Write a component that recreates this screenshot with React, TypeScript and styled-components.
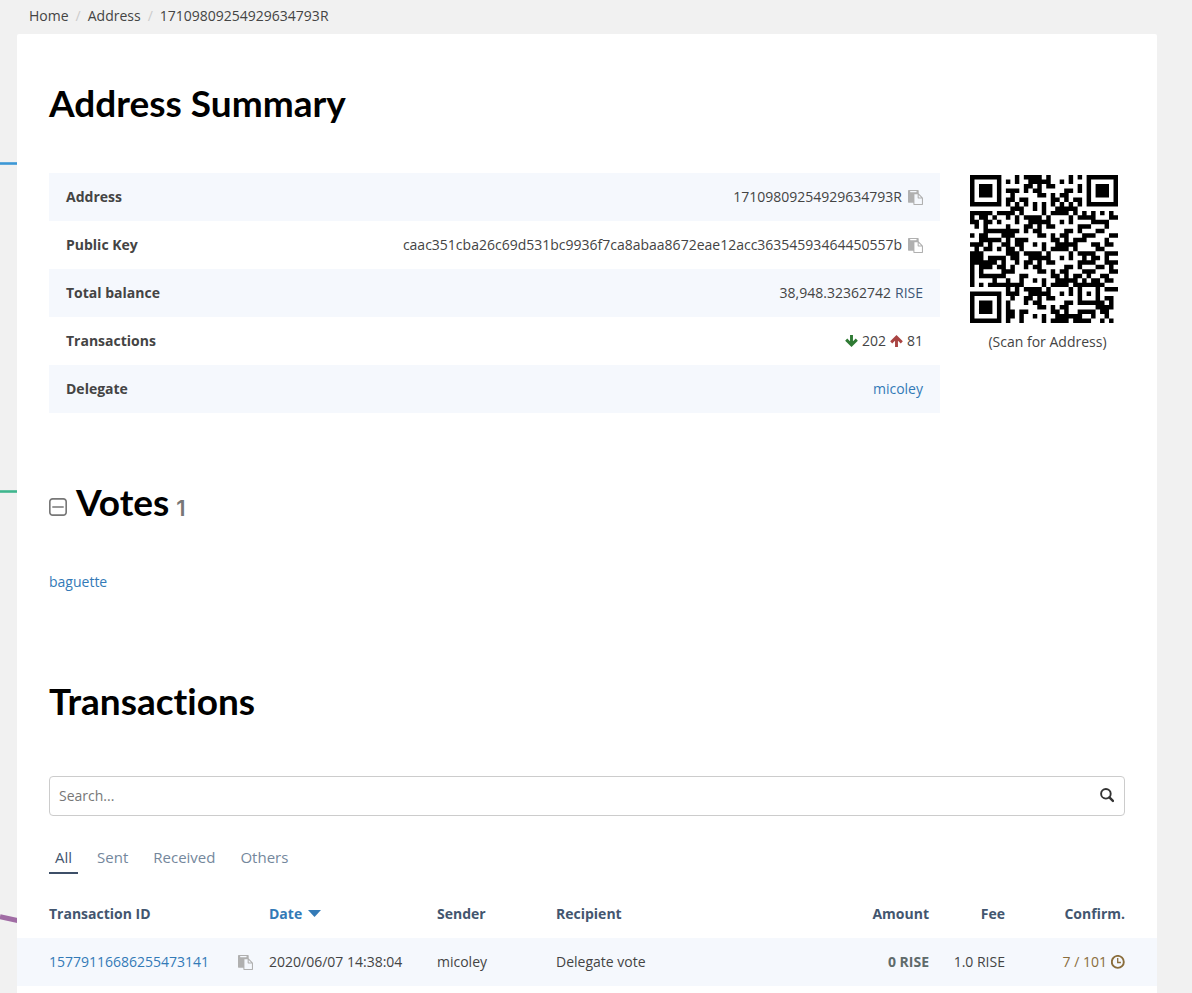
import React from "react";
import styled, { createGlobalStyle } from "styled-components";

const GlobalStyle = createGlobalStyle`
  *, *::before, *::after { box-sizing: border-box; }
  body {
    margin: 0;
    background: #f1f1f1;
    color: #444;
    font: 14px/20px "Open Sans", sans-serif;
  }
`;

/* ---------- QR code (version 4, level L, mask 2, byte mode) ---------- */

const QR_SIZE = 33;
const DATA_WORDS = 80;
const EC_WORDS = 20;

function gfMultiply(a: number, b: number): number {
  let product = 0;
  for (let i = 7; i >= 0; i--) {
    product = (product << 1) ^ ((product >>> 7) * 0x11d);
    product ^= ((b >>> i) & 1) * a;
  }
  return product;
}

function errorWords(data: number[]): number[] {
  const divisor: number[] = new Array(EC_WORDS).fill(0);
  divisor[EC_WORDS - 1] = 1;
  let root = 1;
  for (let i = 0; i < EC_WORDS; i++) {
    for (let j = 0; j < EC_WORDS; j++) {
      divisor[j] = gfMultiply(divisor[j], root);
      if (j + 1 < EC_WORDS) divisor[j] ^= divisor[j + 1];
    }
    root = gfMultiply(root, 2);
  }
  const rest: number[] = new Array(EC_WORDS).fill(0);
  data.forEach((word) => {
    const factor = word ^ (rest.shift() as number);
    rest.push(0);
    divisor.forEach((d, i) => {
      rest[i] ^= gfMultiply(d, factor);
    });
  });
  return rest;
}

function encodeText(text: string): number[] {
  const bits: number[] = [];
  const push = (value: number, length: number) => {
    for (let i = length - 1; i >= 0; i--) bits.push((value >>> i) & 1);
  };
  push(4, 4);
  push(text.length, 8);
  for (const char of text) push(char.charCodeAt(0), 8);
  push(0, 4);
  while (bits.length % 8) bits.push(0);
  const words: number[] = [];
  for (let i = 0; i < bits.length; i += 8) {
    words.push(parseInt(bits.slice(i, i + 8).join(""), 2));
  }
  for (let pad = 0xec; words.length < DATA_WORDS; pad ^= 0xec ^ 0x11) words.push(pad);
  return words.concat(errorWords(words));
}

function qrPath(text: string): string {
  const dark: boolean[][] = Array.from({ length: QR_SIZE }, () => new Array(QR_SIZE).fill(false));
  const fixed: boolean[][] = Array.from({ length: QR_SIZE }, () => new Array(QR_SIZE).fill(false));
  const set = (row: number, col: number, value: boolean) => {
    if (row < 0 || col < 0 || row >= QR_SIZE || col >= QR_SIZE) return;
    dark[row][col] = value;
    fixed[row][col] = true;
  };

  for (let i = 0; i < QR_SIZE; i++) {
    set(6, i, i % 2 === 0);
    set(i, 6, i % 2 === 0);
  }
  [[3, 3], [3, QR_SIZE - 4], [QR_SIZE - 4, 3]].forEach(([row, col]) => {
    for (let y = -4; y <= 4; y++) {
      for (let x = -4; x <= 4; x++) {
        const ring = Math.max(Math.abs(x), Math.abs(y));
        set(row + y, col + x, ring !== 2 && ring !== 4);
      }
    }
  });
  for (let y = -2; y <= 2; y++) {
    for (let x = -2; x <= 2; x++) {
      set(26 + y, 26 + x, Math.max(Math.abs(x), Math.abs(y)) !== 1);
    }
  }

  const format = "111110110101010".split("").map((bit) => bit === "1").reverse();
  for (let i = 0; i <= 5; i++) set(i, 8, format[i]);
  set(7, 8, format[6]);
  set(8, 8, format[7]);
  set(8, 7, format[8]);
  for (let i = 9; i < 15; i++) set(8, 14 - i, format[i]);
  for (let i = 0; i < 8; i++) set(8, QR_SIZE - 1 - i, format[i]);
  for (let i = 8; i < 15; i++) set(QR_SIZE - 15 + i, 8, format[i]);
  set(QR_SIZE - 8, 8, true);

  const words = encodeText(text);
  let index = 0;
  for (let right = QR_SIZE - 1; right >= 1; right -= 2) {
    if (right === 6) right = 5;
    const upward = ((right + 1) & 2) === 0;
    for (let step = 0; step < QR_SIZE; step++) {
      for (let j = 0; j < 2; j++) {
        const col = right - j;
        const row = upward ? QR_SIZE - 1 - step : step;
        if (fixed[row][col]) continue;
        const bit = index < words.length * 8 && ((words[index >>> 3] >>> (7 - (index & 7))) & 1) === 1;
        index++;
        dark[row][col] = bit !== (col % 3 === 0);
      }
    }
  }

  let path = "";
  dark.forEach((cells, row) =>
    cells.forEach((on, col) => {
      if (on) path += `M${col} ${row}h1v1h-1z`;
    })
  );
  return path;
}

/* ---------- Icons ---------- */

const Glyph = styled.svg<{ $gap?: number }>`
  flex: none;
  display: block;
  margin-left: ${(p) => p.$gap ?? 0}px;
`;

const PasteIcon = () => (
  <svg width="15" height="15" viewBox="0 0 1792 1792" fill="#b0b0b0" aria-hidden="true" display="block">
    <path d="M768 1664h896v-640h-416q-40 0-68-28t-28-68v-416h-384v1152zm256-1440v-64q0-13-9.500-22.500t-22.500-9.500h-704q-13 0-22.500 9.500t-9.500 22.500v64q0 13 9.500 22.500t22.500 9.500h704q13 0 22.500-9.500t9.500-22.500zm256 672h299l-299-299v299zm512 128v672q0 40-28 68t-68 28h-960q-40 0-68-28t-28-68v-160h-544q-40 0-68-28t-28-68v-1344q0-40 28-68t68-28h1088q40 0 68 28t28 68v328q21 13 36 28l408 408q28 28 48 76t20 88z" />
  </svg>
);

const MinusSquareIcon = () => (
  <svg width="18" height="18" viewBox="64 64 1408 1408" fill="#777" aria-hidden="true" display="block">
    <path d="M1216 736v64q0 14-9 23t-23 9h-832q-14 0-23-9t-9-23v-64q0-14 9-23t23-9h832q14 0 23 9t9 23zm128 448v-832q0-66-47-113t-113-47h-832q-66 0-113 47t-47 113v832q0 66 47 113t113 47h832q66 0 113-47t47-113zm128-832v832q0 119-84.500 203.500t-203.500 84.500h-832q-119 0-203.500-84.500t-84.500-203.500v-832q0-119 84.500-203.500t203.500-84.500h832q119 0 203.500 84.500t84.500 203.500z" />
  </svg>
);

const ArrowIcon = ({ up }: { up?: boolean }) => (
  <Glyph width="13" height="12" viewBox="0 0 13 12" fill="none" stroke={up ? "#a94442" : "#2f7a34"} strokeWidth="2.900" aria-hidden="true">
    <path d={up ? "M6.500 12V2M1.200 7.400l5.300-5.300 5.300 5.300" : "M6.500 0v10M1.200 4.600l5.300 5.300 5.300-5.300"} />
  </Glyph>
);

const SearchIcon = () => (
  <svg width="14" height="16" viewBox="0 0 14 16" fill="none" stroke="#333" aria-hidden="true" display="block">
    <circle cx="5.900" cy="5.800" r="4.800" strokeWidth="1.900" />
    <path d="M9.400 9.400l3.500 3.400" strokeWidth="2.500" strokeLinecap="round" />
  </svg>
);

const ClockIcon = () => (
  <Glyph $gap={4} width="14" height="15" viewBox="0 0 14 15" fill="none" stroke="#8a6d3b" aria-hidden="true">
    <circle cx="6.800" cy="6.900" r="6" strokeWidth="1.900" />
    <path d="M6.700 3v4.500h3.200" strokeWidth="1.300" />
  </Glyph>
);

/* ---------- Layout ---------- */

const Page = styled.div`
  position: relative;
  min-height: 100vh;
  display: flex;
  flex-direction: column;
  padding: 0 35px 0 17px;
`;

const Backdrop = styled.svg`
  position: absolute;
  top: 0;
  left: 0;
`;

const Breadcrumb = styled.ol`
  list-style: none;
  margin: 0;
  padding: 6px 12px 8px;
  display: flex;

  li + li::before {
    content: "/";
    padding: 0 7px;
    color: #ccc;
  }
`;

const CrumbLink = styled.a`
  color: #444;
  text-decoration: none;
`;

const Card = styled.main`
  position: relative;
  flex: 1;
  background: #fff;
  border-radius: 2px 2px 0 0;
`;

const Section = styled.section`
  padding: 0 32px;
`;

const Title = styled.h1<{ $top: number; $bottom: number }>`
  display: flex;
  align-items: baseline;
  margin: 0;
  padding: ${(p) => p.$top}px 0 ${(p) => p.$bottom}px;
  color: #000;
  font: 700 37px/40px Lato, sans-serif;
  font-variant-ligatures: none;
`;

const Count = styled.small`
  margin-left: 7px;
  color: #777;
  font: 600 22px/24px Inter, sans-serif;
`;

const Toggle = styled.button`
  margin-right: 9px;
  padding: 0;
  border: 0;
  background: none;
  cursor: pointer;
`;

const SummaryGrid = styled.div`
  display: grid;
  grid-template-columns: minmax(0, 1fr) 155px;
  gap: 30px;
`;

const SummaryTable = styled.table`
  width: 100%;
  border-collapse: collapse;

  tr:nth-child(odd) { background: #f5f8fd; }
  th, td { height: 48px; padding: 0 17px; }
  th { text-align: left; font-weight: 700; }
`;

const Value = styled.div`
  display: flex;
  justify-content: flex-end;
  align-items: center;
  gap: 4px;
`;

const Currency = styled.span`
  color: #3d5675;
`;

const Anchor = styled.a`
  color: #337ab7;
  text-decoration: none;
`;

const CopyButton = styled.button`
  margin-left: 2px;
  padding: 0;
  border: 0;
  background: none;
  cursor: pointer;
`;

const QrFigure = styled.figure`
  margin: 0;
  padding-top: 2px;
  text-align: center;
`;

const QrImage = styled.svg`
  display: block;
  width: 148px;
  height: 148px;
`;

const QrCaption = styled.figcaption`
  padding-top: 9px;
`;

const SearchBox = styled.form`
  display: flex;
  align-items: center;
  height: 40px;
  padding: 0 10px 0 9px;
  border: 1px solid #ccc;
  border-radius: 4px;
`;

const SearchInput = styled.input`
  flex: 1;
  min-width: 0;
  padding: 0;
  border: 0;
  outline: 0;
  background: none;
  color: #444;
  font: inherit;

  &::placeholder { color: #777; opacity: 1; }
`;

const SearchButton = styled.button`
  padding: 0;
  border: 0;
  background: none;
  cursor: pointer;
`;

const Tabs = styled.nav`
  display: flex;
  gap: 13px;
  padding: 28px 0 16px;
`;

const Tab = styled.button<{ $active?: boolean }>`
  height: 30px;
  padding: 0 6px 2px;
  border: 0;
  border-bottom: 2px solid ${(p) => (p.$active ? "#3d4f68" : "transparent")};
  background: none;
  color: ${(p) => (p.$active ? "#43566f" : "#74879c")};
  font: 15px/20px "Open Sans", sans-serif;
  cursor: pointer;
`;

const TxTable = styled.table`
  width: 100%;
  table-layout: fixed;
  border-collapse: collapse;

  th, td { height: 48px; padding: 0 8px; text-align: left; }
  th { color: #43566f; font-weight: 700; }
  th:first-child, td:first-child { padding-left: 32px; }
  th:last-child, td:last-child { padding-right: 32px; }
  tbody tr { background: #f5f8fd; }
  th:nth-child(n + 5), td:nth-child(n + 5) { text-align: right; }
`;

const Column = styled.col<{ $width?: number }>`
  width: ${(p) => (p.$width ? `${p.$width}px` : "auto")};
`;

const SortButton = styled.button`
  display: flex;
  align-items: center;
  gap: 6px;
  padding: 0;
  border: 0;
  background: none;
  color: #337ab7;
  font: inherit;
  cursor: pointer;
`;

const IdCell = styled.div`
  display: flex;
  justify-content: space-between;
  align-items: center;
`;

const Amount = styled.strong`
  color: #5f6b6b;
`;

const Confirmations = styled.div`
  display: flex;
  justify-content: flex-end;
  align-items: center;
  color: #8a6d3b;
`;

const ADDRESS = "17109809254929634793R";
const PUBLIC_KEY = "caac351cba26c69d531bc9936f7ca8abaa8672eae12acc36354593464450557b";

const Copyable = ({ text }: { text: string }) => (
  <Value>
    {text}
    <CopyButton type="button" aria-label="Copy">
      <PasteIcon />
    </CopyButton>
  </Value>
);

export default function App() {
  return (
    <>
      <GlobalStyle />
      <Page>
        <Backdrop width="20" height="940" fill="none" aria-hidden="true">
          <path d="M0 163.500h20" stroke="#3c98d6" strokeWidth="2.600" />
          <path d="M0 491.500h20" stroke="#3fb68e" strokeWidth="2.600" />
          <path d="M0 916.800l20 4.200" stroke="#a06ca4" strokeWidth="5" />
        </Backdrop>
        <Breadcrumb>
          <li><CrumbLink href="#home">Home</CrumbLink></li>
          <li>Address</li>
          <li>{ADDRESS}</li>
        </Breadcrumb>
        <Card>
          <Section>
            <Title $top={49} $bottom={50}>Address Summary</Title>
            <SummaryGrid>
              <SummaryTable>
                <tbody>
                  <tr>
                    <th scope="row">Address</th>
                    <td><Copyable text={ADDRESS} /></td>
                  </tr>
                  <tr>
                    <th scope="row">Public Key</th>
                    <td><Copyable text={PUBLIC_KEY} /></td>
                  </tr>
                  <tr>
                    <th scope="row">Total balance</th>
                    <td><Value>38,948.32362742 <Currency>RISE</Currency></Value></td>
                  </tr>
                  <tr>
                    <th scope="row">Transactions</th>
                    <td><Value><ArrowIcon /> 202 <ArrowIcon up /> 81</Value></td>
                  </tr>
                  <tr>
                    <th scope="row">Delegate</th>
                    <td><Value><Anchor href="#micoley">micoley</Anchor></Value></td>
                  </tr>
                </tbody>
              </SummaryTable>
              <QrFigure>
                <QrImage viewBox="0 0 33 33" role="img" aria-label="QR code of the address">
                  <path d={qrPath(ADDRESS)} fill="#000" />
                </QrImage>
                <QrCaption>(Scan for Address)</QrCaption>
              </QrFigure>
            </SummaryGrid>
          </Section>
          <Section>
            <Title as="h2" $top={69} $bottom={50}>
              <Toggle type="button" aria-label="Collapse votes"><MinusSquareIcon /></Toggle>
              Votes
              <Count>1</Count>
            </Title>
            <Anchor href="#baguette">baguette</Anchor>
          </Section>
          <Section>
            <Title as="h2" $top={89} $bottom={55}>Transactions</Title>
            <SearchBox>
              <SearchInput type="text" placeholder="Search..." aria-label="Search transactions" />
              <SearchButton type="button" aria-label="Search"><SearchIcon /></SearchButton>
            </SearchBox>
            <Tabs>
              <Tab type="button" $active>All</Tab>
              <Tab type="button">Sent</Tab>
              <Tab type="button">Received</Tab>
              <Tab type="button">Others</Tab>
            </Tabs>
          </Section>
          <TxTable>
            <colgroup>
              <Column $width={244} />
              <Column $width={168} />
              <Column $width={119} />
              <Column />
              <Column $width={120} />
              <Column $width={76} />
              <Column $width={144} />
            </colgroup>
            <thead>
              <tr>
                <th scope="col">Transaction ID</th>
                <th scope="col">
                  <SortButton type="button">
                    Date
                    <svg width="13" height="9" viewBox="0 0 13 9" fill="#337ab7" aria-hidden="true">
                      <path d="M0 0h13L6.500 7z" />
                    </svg>
                  </SortButton>
                </th>
                <th scope="col">Sender</th>
                <th scope="col">Recipient</th>
                <th scope="col">Amount</th>
                <th scope="col">Fee</th>
                <th scope="col">Confirm.</th>
              </tr>
            </thead>
            <tbody>
              <tr>
                <td>
                  <IdCell>
                    <Anchor href="#15779116686255473141">15779116686255473141</Anchor>
                    <CopyButton type="button" aria-label="Copy"><PasteIcon /></CopyButton>
                  </IdCell>
                </td>
                <td>2020/06/07 14:38:04</td>
                <td>micoley</td>
                <td>Delegate vote</td>
                <td><Amount>0 RISE</Amount></td>
                <td>1.0 RISE</td>
                <td><Confirmations>7 / 101 <ClockIcon /></Confirmations></td>
              </tr>
            </tbody>
          </TxTable>
        </Card>
      </Page>
    </>
  );
}
